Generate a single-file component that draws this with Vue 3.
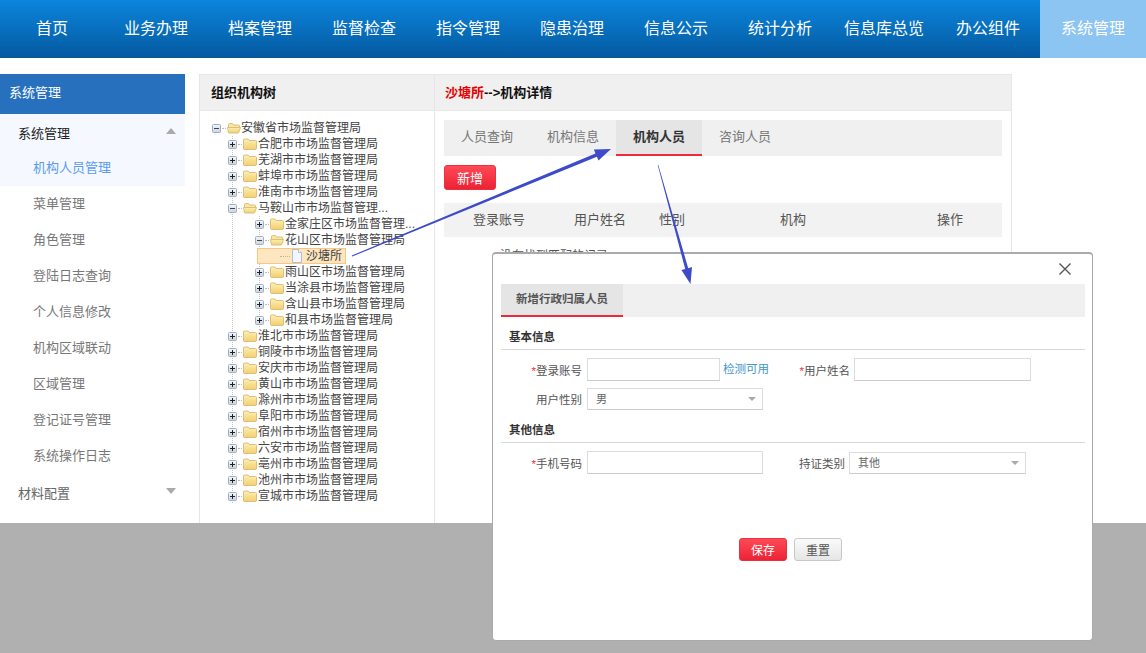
<script setup>
import { ref } from 'vue'

const navItems = ['首页', '业务办理', '档案管理', '监督检查', '指令管理', '隐患治理', '信息公示', '统计分析', '信息库总览', '办公组件', '系统管理']
const activeNav = ref('系统管理')

const sideItems = ['机构人员管理', '菜单管理', '角色管理', '登陆日志查询', '个人信息修改', '机构区域联动', '区域管理', '登记证号管理', '系统操作日志']

// flat list of the tree: level + whether the node is expanded
const treeRows = [
  { name: '安徽省市场监督管理局', level: 0, open: true },
  { name: '合肥市市场监督管理局', level: 1 },
  { name: '芜湖市市场监督管理局', level: 1 },
  { name: '蚌埠市市场监督管理局', level: 1 },
  { name: '淮南市市场监督管理局', level: 1 },
  { name: '马鞍山市市场监督管理...', level: 1, open: true },
  { name: '金家庄区市场监督管理...', level: 2 },
  { name: '花山区市场监督管理局', level: 2, open: true },
  { name: '沙塘所', level: 3, leaf: true },
  { name: '雨山区市场监督管理局', level: 2 },
  { name: '当涂县市场监督管理局', level: 2 },
  { name: '含山县市场监督管理局', level: 2 },
  { name: '和县市场监督管理局', level: 2 },
  { name: '淮北市市场监督管理局', level: 1 },
  { name: '铜陵市市场监督管理局', level: 1 },
  { name: '安庆市市场监督管理局', level: 1 },
  { name: '黄山市市场监督管理局', level: 1 },
  { name: '滁州市市场监督管理局', level: 1 },
  { name: '阜阳市市场监督管理局', level: 1 },
  { name: '宿州市市场监督管理局', level: 1 },
  { name: '六安市市场监督管理局', level: 1 },
  { name: '亳州市市场监督管理局', level: 1 },
  { name: '池州市市场监督管理局', level: 1 },
  { name: '宣城市市场监督管理局', level: 1 }
]

const detailTabs = ['人员查询', '机构信息', '机构人员', '咨询人员']
const tableHead = ['登录账号', '用户姓名', '性别', '机构', '操作']
</script>

<template>
  <div class="page">
    <!-- shared gradients for the tree icons -->
    <svg class="defs" width="0" height="0">
      <defs>
        <linearGradient id="folderFill" x1="0" y1="0" x2="0" y2="1">
          <stop offset="0" stop-color="#fdf0b8" />
          <stop offset="1" stop-color="#f2cf6e" />
        </linearGradient>
        <linearGradient id="boxFill" x1="0" y1="0" x2="0" y2="1">
          <stop offset="0" stop-color="#f4f6f9" />
          <stop offset="1" stop-color="#c9d3df" />
        </linearGradient>
      </defs>
    </svg>

    <header class="topbar">
      <a v-for="item in navItems" :key="item" class="nav-item" :class="{ active: item === activeNav }">{{ item }}</a>
    </header>

    <main class="content">
      <aside class="sidebar">
        <div class="side-title">系统管理</div>
        <div class="side-head current">系统管理<i class="tri up"></i></div>
        <div
          v-for="(item, i) in sideItems"
          :key="item"
          class="side-item"
          :class="{ active: i === 0 }"
        >{{ item }}</div>
        <div class="side-head">材料配置<i class="tri down"></i></div>
      </aside>

      <section class="panel">
        <div class="tree-col">
          <div class="panel-title">组织机构树</div>
          <div class="tree">
            <div v-for="row in treeRows" :key="row.name" class="tree-row" :class="'lv' + row.level">
              <template v-if="!row.leaf">
                <span class="exp">
                  <svg width="9" height="9" viewBox="0 0 9 9">
                    <rect x="0.5" y="0.5" width="8" height="8" rx="1" fill="url(#boxFill)" stroke="#9fb0c4" />
                    <path v-if="row.open" d="M2 4.5h5" stroke="#444" />
                    <path v-else d="M2 4.5h5M4.5 2v5" stroke="#222" />
                  </svg>
                </span>
                <svg v-if="row.open" class="folder" width="14" height="12" viewBox="0 0 14 12">
                  <path d="M1.5 10.5V2.5q0-1 1-1h3l1 1.5h5q1 0 1 1v1" fill="#f8e6a6" stroke="#dcc07a" />
                  <path d="M0.5 5.5h11.5l1.5 0-2 5.5H1.5z" fill="url(#folderFill)" stroke="#dcc07a" />
                </svg>
                <svg v-else class="folder" width="14" height="12" viewBox="0 0 14 12">
                  <path d="M0.5 10V2q0-1 1-1h3.5l1 1.5h6.5q1 0 1 1V10q0 1.500-1 1.500h-11q-1 0-1-1.500z" fill="url(#folderFill)" stroke="#dcc07a" />
                </svg>
                <span class="tree-text">{{ row.name }}</span>
              </template>
              <span v-else class="tree-selected">
                <i class="leaf-dots"></i>
                <svg class="doc" width="12" height="14" viewBox="0 0 12 14">
                  <path d="M1.500 0.500h6l3 3v10h-9z" fill="#f3f7fd" stroke="#a9bfdc" />
                  <path d="M7.500 0.500v3h3" fill="#fff" stroke="#a9bfdc" />
                </svg>
                <span>{{ row.name }}</span>
              </span>
            </div>
          </div>
        </div>

        <div class="detail-col">
          <div class="panel-title detail-title"><span class="red">沙塘所</span>--&gt;机构详情</div>
          <div class="detail-body">
            <div class="tabs">
              <div v-for="tab in detailTabs" :key="tab" class="tab" :class="{ active: tab === '机构人员' }">{{ tab }}</div>
            </div>
            <button class="btn btn-red btn-add" type="button">新增</button>
            <div class="table-head">
              <span v-for="h in tableHead" :key="h">{{ h }}</span>
            </div>
            <div class="empty">没有找到匹配的记录</div>
          </div>
        </div>
      </section>
    </main>

    <div class="grey-area"></div>

    <!-- dialog -->
    <div class="modal">
      <div class="modal-top">
        <svg width="14" height="14" viewBox="0 0 14 14">
          <path d="M1.500 1.500l11 11M12.500 1.500l-11 11" stroke="#555" stroke-width="1.400" fill="none" />
        </svg>
      </div>
      <div class="modal-tabs">
        <div class="modal-tab">新增行政归属人员</div>
      </div>

      <div class="section">基本信息</div>
      <div class="form-row first">
        <label class="label"><em>*</em>登录账号</label>
        <input class="field w-133" type="text" />
        <a class="check">检测可用</a>
        <label class="label"><em>*</em>用户姓名</label>
        <input class="field w-177 tight" type="text" />
      </div>
      <div class="form-row">
        <label class="label">用户性别</label>
        <div class="field select w-176">男<i class="tri-small"></i></div>
      </div>

      <div class="section">其他信息</div>
      <div class="form-row first">
        <label class="label"><em>*</em>手机号码</label>
        <input class="field w-176" type="text" />
        <label class="label wide">持证类别</label>
        <div class="field select w-177 tight">其他<i class="tri-small"></i></div>
      </div>

      <div class="modal-actions">
        <button class="btn btn-red btn-save" type="button">保存</button>
        <button class="btn btn-plain" type="button">重置</button>
      </div>
    </div>

    <!-- hand drawn annotation arrows over the screenshot -->
    <svg class="arrows" width="1146" height="653" viewBox="0 0 1146 653">
      <polygon fill="#3d4bcb" points="351.800,255.500 595.500,153.400 593.900,149.600 611,149 598.500,160.600 596.900,156.800 352.200,256.500" />
      <polygon fill="#3d4bcb" points="657.700,165.100 685.200,269 681.400,270.100 690.500,284 692,267.100 688.200,268.200 658.300,165" />
    </svg>
  </div>
</template>

<style>
html,
body {
  margin: 0;
  padding: 0;
  background: #fff;
}
</style>

<style scoped>
.page {
  position: relative;
  display: flex;
  flex-direction: column;
  min-height: 100vh;
  overflow: hidden;
  font-family: "Liberation Sans", "Noto Sans CJK SC", sans-serif;
  font-size: 13px;
  color: #333;
}

.defs {
  position: absolute;
}

/* top navigation */
.topbar {
  display: flex;
  height: 58px;
  flex: none;
  background: linear-gradient(to bottom, #0c85dd, #04599f);
}

.nav-item {
  width: 104px;
  line-height: 58px;
  text-align: center;
  font-size: 16px;
  color: #fff;
}

.nav-item:last-child {
  width: 106px;
}

.nav-item.active {
  background: #8cc4f2;
}

.content {
  display: flex;
  flex: none;
  height: 449px;
  padding-top: 16px;
  gap: 14px;
}

/* left menu */
.sidebar {
  width: 185px;
  flex: none;
}

.side-title {
  height: 40px;
  line-height: 38px;
  padding-left: 9px;
  background: #2670bd;
  color: #fff;
}

.side-head {
  position: relative;
  height: 36px;
  line-height: 40px;
  padding-left: 18px;
  color: #666;
}

.side-head.current {
  background: #f5f8fe;
  color: #222;
}

.side-item {
  height: 36px;
  line-height: 36px;
  padding-left: 33px;
  color: #777;
}

.side-item.active {
  background: #f5f8fe;
  color: #5b9cf0;
}

.tri {
  position: absolute;
  right: 9px;
  width: 0;
  height: 0;
  border-left: 5px solid transparent;
  border-right: 5px solid transparent;
}

.tri.up {
  top: 14px;
  border-bottom: 6px solid #aaa;
}

.tri.down {
  top: 14px;
  border-top: 6px solid #aaa;
}

/* tree + detail panel */
.panel {
  display: flex;
  width: 813px;
  flex: none;
  box-sizing: border-box;
  border: 1px solid #e6e6e6;
  border-bottom: 0;
}

.tree-col {
  width: 235px;
  flex: none;
  box-sizing: border-box;
  border-right: 1px solid #e6e6e6;
}

.panel-title {
  height: 36px;
  line-height: 35px;
  box-sizing: border-box;
  padding-left: 11px;
  background: #f0f0f0;
  border-bottom: 1px solid #e8e8e8;
  color: #111;
  font-weight: 700;
}

.tree {
  padding-top: 9px;
  font-size: 12px;
  color: #444;
}

.tree-row {
  display: flex;
  align-items: center;
  height: 16px;
  line-height: 16px;
  white-space: nowrap;
}

.lv0 {
  padding-left: 12px;
}

.lv1 {
  padding-left: 28px;
  background: repeating-linear-gradient(to bottom, #c4c4c4 0 1px, transparent 1px 2px) 32px 0 / 1px 100% no-repeat;
}

.lv2,
.lv3 {
  padding-left: 55px;
  background:
    repeating-linear-gradient(to bottom, #c4c4c4 0 1px, transparent 1px 2px) 32px 0 / 1px 100% no-repeat,
    repeating-linear-gradient(to bottom, #c4c4c4 0 1px, transparent 1px 2px) 59px 0 / 1px 100% no-repeat;
}

.lv3 {
  padding-left: 57px;
}

.exp {
  position: relative;
  display: block;
  width: 9px;
  height: 9px;
  margin-right: 6px;
  flex: none;
  line-height: 0;
}

.exp::after {
  content: "";
  position: absolute;
  left: 10px;
  top: 4px;
  width: 4px;
  border-top: 1px dotted #bbb;
}

.folder {
  flex: none;
  margin-right: 1px;
}

.lv0 .folder {
  margin-right: 0;
}

.tree-selected {
  position: relative;
  display: flex;
  align-items: center;
  height: 16px;
  box-sizing: border-box;
  padding: 0 3px 0 33px;
  background: #fde6c0;
  border: 1px solid #fbc67e;
}

.leaf-dots {
  position: absolute;
  left: 22px;
  top: 7px;
  width: 10px;
  border-top: 1px dotted #c8b48c;
}

.doc {
  flex: none;
  margin-right: 3px;
}

.detail-col {
  flex: 1;
  min-width: 0;
}

.detail-title {
  padding-left: 10px;
}

.red {
  color: #e60000;
}

.detail-body {
  padding: 9px 9px 0;
}

.tabs {
  display: flex;
  height: 36px;
  background: #f0f0f0;
}

.tab {
  width: 86px;
  height: 36px;
  box-sizing: border-box;
  line-height: 34px;
  text-align: center;
  color: #777;
}

.tab.active {
  background: #e5e5e5;
  border-bottom: 2px solid #f0283c;
  color: #333;
  font-weight: 700;
}

.btn {
  display: block;
  padding: 0;
  border-radius: 3px;
  font-family: inherit;
  cursor: pointer;
}

.btn-red {
  border: 1px solid #e8323f;
  background: linear-gradient(to bottom, #ff4a55, #ec2235);
  color: #fff;
}

.btn-add {
  width: 52px;
  height: 25px;
  margin-top: 9px;
  font-size: 13px;
}

.table-head {
  display: grid;
  grid-template-columns: 101px 85px 121px 157px 1fr;
  height: 34px;
  margin-top: 13px;
  padding-left: 29px;
  line-height: 34px;
  background: #f2f2f2;
  color: #555;
}

.empty {
  margin-top: 12px;
  padding-left: 56px;
  font-size: 12px;
  line-height: 14px;
  color: #555;
}

.grey-area {
  flex: 1;
  background: #b0b0b0;
}

/* dialog */
.modal {
  position: absolute;
  left: 492px;
  top: 252px;
  width: 601px;
  height: 389px;
  box-sizing: border-box;
  padding: 0 7px 0 8px;
  background: #fff;
  border: 1px solid #aaa;
  border-top-width: 2px;
  border-radius: 4px;
  font-size: 11.5px;
  color: #555;
}

.modal-top {
  display: flex;
  justify-content: flex-end;
  align-items: center;
  height: 30px;
  padding-right: 13px;
  box-sizing: border-box;
}

.modal-tabs {
  height: 33px;
  background: #f0f0f0;
}

.modal-tab {
  width: 122px;
  height: 33px;
  box-sizing: border-box;
  line-height: 30px;
  text-align: center;
  background: #e5e5e5;
  border-bottom: 2px solid #f0283c;
  font-weight: 700;
}

.section {
  height: 33px;
  box-sizing: border-box;
  padding: 13px 0 0 8px;
  line-height: 14px;
  border-bottom: 1px solid #d8d8d8;
  font-weight: 700;
  color: #333;
}

.form-row {
  display: flex;
  align-items: center;
  margin-top: 7px;
}

.form-row.first {
  margin-top: 8px;
}

.label {
  width: 81px;
  flex: none;
  text-align: right;
}

.label.wide {
  width: 82px;
}

.label em {
  font-style: normal;
  color: #f0283c;
}

.field {
  display: block;
  height: 23px;
  flex: none;
  box-sizing: border-box;
  margin: 0 0 0 5px;
  padding: 0 8px;
  background: #fff;
  border: 1px solid #dcdcdc;
  border-bottom-color: #ccc;
  outline: none;
  font-size: 11px;
  line-height: 21px;
  color: #666;
}

.field.tight {
  margin-left: 4px;
}

.w-133 {
  width: 133px;
}

.w-176 {
  width: 176px;
}

.w-177 {
  width: 177px;
}

.select {
  position: relative;
  height: 22px;
  line-height: 20px;
}

.tri-small {
  position: absolute;
  right: 6px;
  top: 8px;
  width: 0;
  height: 0;
  border-left: 4px solid transparent;
  border-right: 4px solid transparent;
  border-top: 4px solid #aaa;
}

.check {
  width: 46px;
  flex: none;
  margin-left: 3px;
  margin-top: -3px;
  color: #3f96cf;
}

.modal-actions {
  display: flex;
  justify-content: center;
  gap: 7px;
  margin-top: 64px;
  padding-right: 5px;
}

.btn-save,
.btn-plain {
  width: 48px;
  height: 23px;
  font-size: 12px;
}

.btn-plain {
  border: 1px solid #c8c8c8;
  background: linear-gradient(to bottom, #fafafa, #e6e6e6);
  color: #555;
}

.arrows {
  position: absolute;
  left: 0;
  top: 0;
  pointer-events: none;
}
</style>
